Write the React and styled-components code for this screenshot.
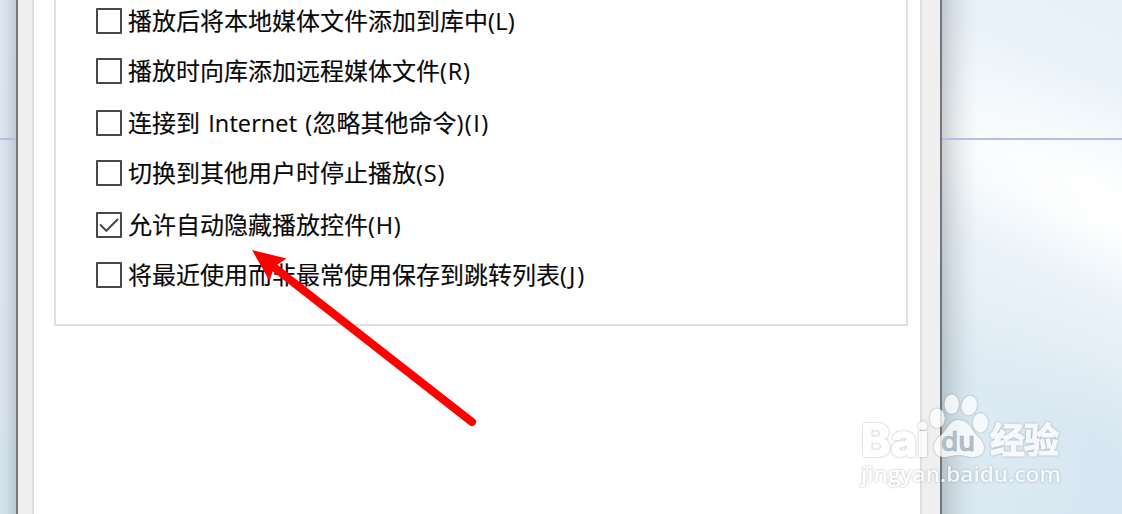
import React from "react";
import styled, { createGlobalStyle } from "styled-components";

const GlobalStyle = createGlobalStyle`
  * { box-sizing: border-box; }
  body { margin: 0; overflow: hidden; background: #fff; }
`;

const Desktop = styled.div`
  position: relative;
  display: flex;
  width: 1122px;
  height: 514px;
  overflow: hidden;
  font-family: "Open Sans", "Noto Sans CJK SC", sans-serif;
`;

const Wallpaper = styled.div`
  display: flex;
  flex-direction: column;
  flex: ${(p) => (p.$side === "left" ? "0 0 16px" : "1 1 0")};
  padding-top: 138px;
  background: ${(p) =>
    p.$side === "left"
      ? "linear-gradient(90deg, rgba(120,130,140,0) 0%, rgba(120,130,140,.07) 40%, rgba(120,130,140,.28) 100%), linear-gradient(180deg, #dfe8f2 0%, #dde5f0 50%, #dce4ef 75%, #d5e5ed 90%)"
      : "linear-gradient(90deg, rgba(95,102,108,.3) 0, rgba(105,112,118,.18) 10px, rgba(105,112,118,.07) 22px, rgba(105,112,118,0) 36px), linear-gradient(90deg, rgba(234,243,250,.35) 0, rgba(234,243,250,0) 85%), linear-gradient(204deg, #e7f0f8 0%, #eaf2f9 15%, #f5fafc 25%, #ffffff 34%, #fdfefe 40%, #ebf3f9 51%, #e5eff6 60%, #d8e7f1 75%, #d7e7f1 88%, #d5e7f0 100%)"};
`;

const Horizon = styled.div`
  height: 2px;
  background: #b2c1e2;
`;

const Dialog = styled.main`
  display: flex;
  flex: 0 0 926px;
  padding: 0 18px 0 14px;
  background: #efefef;
  border-left: 2px solid #757a7e;
  border-right: 2px solid #73777b;
`;

const TabPage = styled.section`
  flex: 1;
  padding: 0 12px 0 20px;
  background: #fff;
  border-left: 2px solid #dedede;
  border-right: 2px solid #dedede;
`;

const OptionGroup = styled.div`
  display: flex;
  flex-direction: column;
  height: 326px;
  padding: 8px 0 0 40px;
  border: 2px solid #e0e0e0;
  border-top: 0;
`;

const Option = styled.label`
  display: flex;
  align-items: center;
  gap: 6px;
  height: 26px;
  margin-bottom: ${(p) => p.$gap}px;
`;

const CheckBox = styled.span`
  display: flex;
  flex: 0 0 26px;
  height: 26px;
  border: 2px solid #484848;
  border-radius: 1px;
  background: #fff;
`;

const Caption = styled.span`
  font-size: 24px;
  line-height: 26px;
  color: #080808;
  white-space: pre;
  -webkit-text-stroke: 0.15px #080808;
`;

const Latin = styled.span`
  font-size: 23.5px;
  letter-spacing: ${(p) => p.$spacing || 0}px;
  word-spacing: 2px;
`;

const Overlay = styled.svg`
  position: absolute;
  left: 0;
  top: 0;
  pointer-events: none;
`;

const Mark = styled.g`
  fill: #fff;
  stroke: #fff;
  stroke-linejoin: round;
  opacity: 0.75;
  filter: drop-shadow(0 0 1px rgba(95, 105, 112, 0.65));
`;

const options = [
  { text: "播放后将本地媒体文件添加到库中", tail: "(L)", spacing: 0.3, gap: 24 },
  { text: "播放时向库添加远程媒体文件", tail: "(R)", spacing: 0.8, gap: 26 },
  { text: "连接到", word: " Internet (", rest: "忽略其他命令", tail: ")(I)", spacing: 1.5, gap: 24 },
  { text: "切换到其他用户时停止播放", tail: "(S)", spacing: 0.9, gap: 26 },
  { text: "允许自动隐藏播放控件", tail: "(H)", spacing: 0.8, gap: 24, checked: true },
  { text: "将最近使用而非最常使用保存到跳转列表", tail: "(J)", spacing: 2, gap: 0 },
];

function Tick() {
  return (
    <svg width="22" height="22" viewBox="0 0 22 22">
      <path d="M2 10.5 L8.3 16.8 L20 5" fill="none" stroke="#484848" strokeWidth="2" />
    </svg>
  );
}

function Pointer() {
  return (
    <g fill="#fe0000">
      <path d="M275 268 L472 422" stroke="#fe0000" strokeWidth="8" strokeLinecap="round" />
      <path d="M252 250 L286.5 258.5 L277 265 L273 270.5 L269.5 281 Z" />
    </g>
  );
}

function Watermark() {
  return (
    <>
      <Mark>
        <text x="861" y="455.5" fontFamily="Inter" fontWeight="700" fontSize="44" strokeWidth="1.8" textLength="68" lengthAdjust="spacingAndGlyphs">Bai</text>
        <g stroke="none">
          <ellipse cx="937.3" cy="418.3" rx="7.5" ry="9.8" />
          <ellipse cx="951.7" cy="404.3" rx="7.2" ry="9.8" />
          <ellipse cx="969.3" cy="405.6" rx="7.7" ry="9.8" transform="rotate(12 969.3 405.6)" />
          <ellipse cx="980.5" cy="422.8" rx="7.6" ry="9.6" />
          <path d="M958.7 420 C966 420 970 425 973 431 C977 437 984 440 984 448 C984 454 979 457 973 457 C967 457 964 455 958 455 C953 455 950 457 944 457 C938 457 934 453 934 447 C934 440 940 437 944 432 C949 426 951 420 958.7 420 Z" />
        </g>
        <text x="990" y="453" fontFamily="Noto Sans CJK SC" fontWeight="700" fontSize="35" strokeWidth="1.2" textLength="69">经验</text>
        <text x="861" y="482" fontFamily="Open Sans" fontWeight="600" fontSize="22" strokeWidth=".1" textLength="200" lengthAdjust="spacingAndGlyphs">jingyan.baidu.com</text>
      </Mark>
      <text x="941" y="451" fontFamily="Inter" fontWeight="500" fontSize="27" textLength="34" lengthAdjust="spacingAndGlyphs" fill="#b3c1cc" stroke="#9fabb5" strokeWidth=".6">du</text>
    </>
  );
}

export default function App() {
  return (
    <>
      <GlobalStyle />
      <Desktop>
        <Wallpaper $side="left"><Horizon /></Wallpaper>
        <Dialog>
          <TabPage>
            <OptionGroup>
              {options.map((o) => (
                <Option key={o.text} $gap={o.gap}>
                  <CheckBox>{o.checked && <Tick />}</CheckBox>
                  <Caption>
                    {o.text}
                    {o.word && <Latin $spacing={0.1}>{o.word}</Latin>}
                    {o.rest}
                    <Latin $spacing={o.spacing}>{o.tail}</Latin>
                  </Caption>
                </Option>
              ))}
            </OptionGroup>
          </TabPage>
        </Dialog>
        <Wallpaper $side="right"><Horizon /></Wallpaper>
        <Overlay width="1122" height="514" viewBox="0 0 1122 514">
          <Pointer />
          <Watermark />
        </Overlay>
      </Desktop>
    </>
  );
}
